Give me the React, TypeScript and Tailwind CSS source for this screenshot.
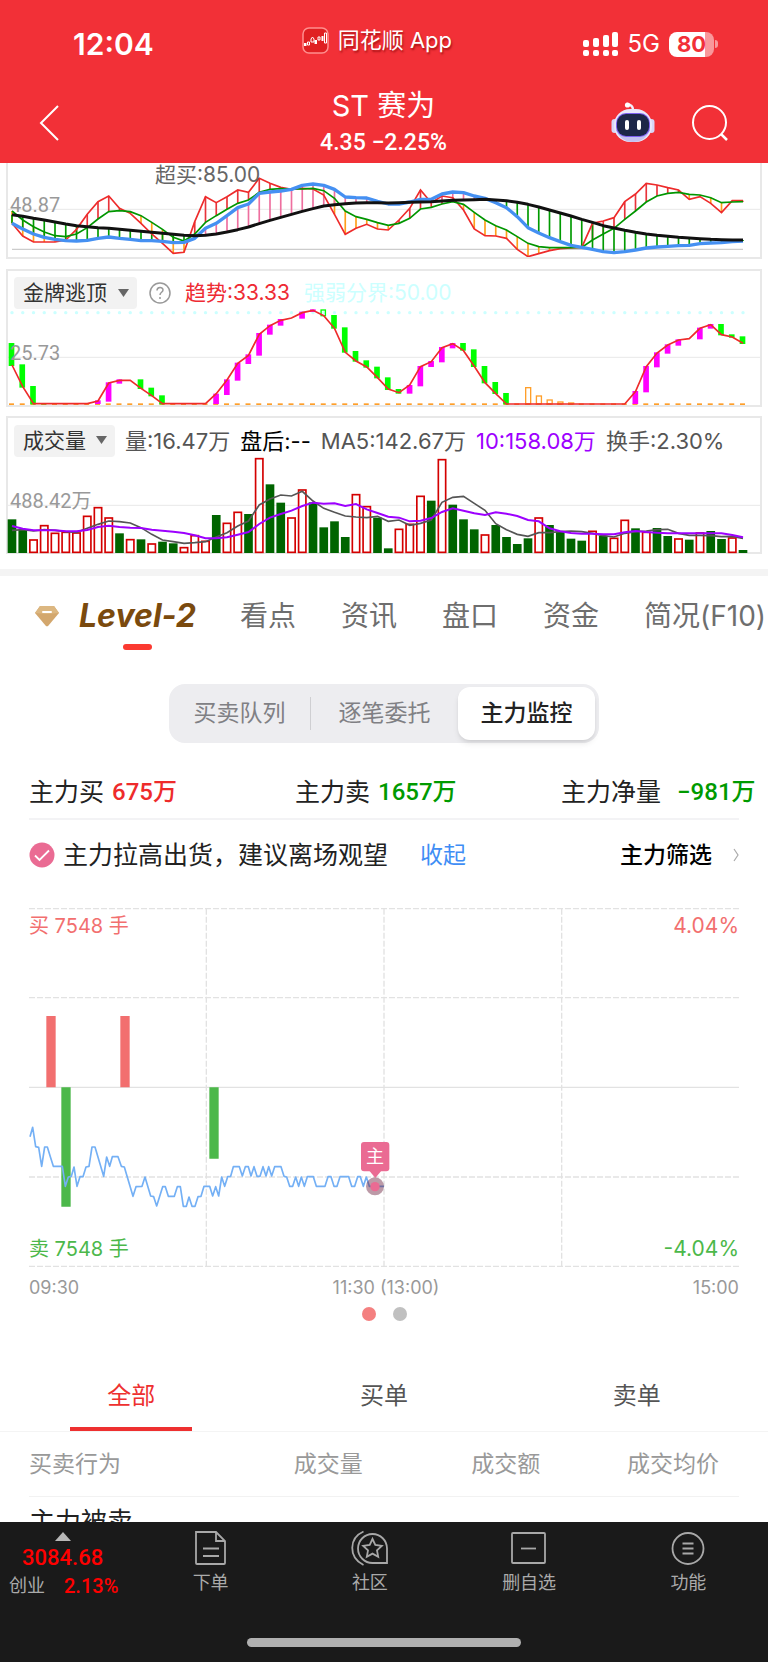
import { useState } from "react";

// Chart drawings use three units per pixel
const xAt = (i: number) => 36 + i * 32.25;
const toPoints = (ys: number[]) => ys.map((y, i) => `${xAt(i)},${y}`).join(" ");

const fastLine = [
  190, 228, 246, 246, 246, 240, 208, 163, 125, 108, 145, 160, 190, 222, 250, 280, 277, 185, 110, 128, 110, 90, 97, 55,
  70, 82, 88, 85, 87, 105, 163, 223, 205, 193, 207, 210, 180, 145, 90, 128, 108, 113, 150, 207, 227, 228, 235, 268, 290,
  281, 272, 266, 264, 262, 190, 183, 173, 125, 102, 70, 75, 83, 90, 118, 110, 130, 158, 122, 122,
];
const slowLine = [
  153, 180, 200, 216, 227, 230, 222, 203, 177, 155, 152, 155, 167, 187, 208, 232, 243, 222, 187, 167, 148, 130, 120, 97,
  88, 86, 87, 87, 85, 92, 115, 153, 170, 178, 188, 196, 190, 175, 147, 142, 132, 125, 133, 157, 180, 197, 210, 230, 250,
  260, 263, 263, 263, 262, 240, 222, 205, 178, 153, 126, 108, 100, 97, 103, 105, 113, 128, 126, 125,
];
const blueLine = [
  190, 207, 222, 232, 238, 242, 243, 241, 235, 231, 235, 238, 242, 242, 244, 248, 247, 235, 205, 190, 167, 143, 132, 100,
  96, 93, 88, 76, 72, 76, 88, 111, 113, 114, 124, 132, 132, 126, 118, 118, 102, 96, 98, 108, 115, 128, 143, 170, 203,
  219, 233, 245, 256, 262, 268, 275, 278, 275, 270, 264, 261, 259, 257, 256, 251, 249, 248, 245, 243,
];
const blackLine = [
  164, 169, 175, 180, 186, 192, 197, 200, 203, 205, 208, 211, 214, 217, 220, 223, 226, 227, 226, 222, 216, 209, 201, 191,
  181, 172, 163, 154, 146, 138, 134, 131, 129, 128, 128, 129, 128, 127, 126, 125, 123, 121, 120, 119, 118, 120, 122, 127,
  133, 141, 150, 159, 168, 178, 187, 197, 204, 211, 217, 222, 226, 229, 232, 234, 236, 238, 239, 240, 240,
];

const trendLine = [
  300, 365, 416, 416, 416, 416, 416, 416, 408, 354, 346, 346, 370, 392, 416, 416, 416, 416, 416, 386, 345, 295, 271, 208,
  182, 166, 159, 143, 136, 152, 190, 262, 288, 306, 338, 372, 383, 360, 305, 290, 248, 236, 257, 304, 353, 386, 417, 417,
  417, 417, 417, 417, 417, 417, 417, 417, 417, 417, 380, 305, 264, 240, 225, 221, 190, 179, 209, 216, 235,
];
// [index, top, bottom]
const fallBars = [
  [0, 234, 303], [1, 298, 368], [2, 363, 418], [3, 414, 418], [12, 343, 372], [13, 368, 394], [14, 391, 418],
  [30, 150, 191], [31, 187, 263], [32, 258, 290], [33, 286, 308], [34, 305, 340], [35, 337, 375], [36, 372, 386],
  [42, 234, 257], [43, 253, 306], [44, 303, 355], [45, 351, 387], [46, 384, 418], [66, 177, 211], [67, 208, 218],
  [68, 214, 237],
];
const riseBars = [
  [8, 406, 417], [9, 352, 410], [10, 343, 356], [19, 386, 417], [20, 343, 390], [21, 293, 347], [22, 268, 297],
  [23, 204, 272], [24, 179, 209], [25, 162, 182], [27, 140, 161], [28, 133, 141], [37, 360, 386], [38, 303, 364],
  [39, 288, 306], [40, 246, 292], [41, 234, 250], [58, 378, 417], [59, 303, 382], [60, 262, 307], [61, 238, 266],
  [62, 223, 242], [64, 188, 223], [65, 177, 191],
];
const signalBars = [[48, 368], [49, 393], [50, 405], [51, 411], [52, 414]];

const volumeTops = [
  313, 345, 373, 330, 353, 350, 352, 302, 276, 307, 355, 372, 373, 385, 380, 385, 396, 360, 377, 300, 323, 290, 297, 129,
  208, 263, 307, 223, 262, 337, 319, 366, 237, 273, 308, 400, 341, 326, 242, 257, 132, 269, 313, 343, 358, 330, 366, 387,
  370, 307, 330, 350, 371, 377, 347, 362, 368, 314, 340, 350, 339, 363, 370, 374, 352, 348, 372, 367, 405,
];
const volumeSides = "GGRRRRRRRRGRGRGGRRRGRRGRGGRRGGGGRRGGRRRGRGGGRGGGGRGGGGRGRRGRGGRGRGGRG";
const ma5 = [
  346, 344, 348, 344, 346, 350, 352, 340, 328, 318, 320, 324, 338, 358, 375, 380, 385, 383, 380, 366, 353, 333, 318, 270,
  252, 240, 243, 229, 258, 280, 292, 303, 306, 308, 304, 319, 315, 331, 325, 315, 262, 247, 244, 265, 286, 326, 344, 358,
  364, 353, 353, 350, 348, 350, 355, 362, 366, 355, 350, 348, 344, 343, 355, 361, 361, 362, 365, 364, 370,
];
const ma10 = [
  333, 341, 346, 346, 346, 349, 349, 345, 336, 332, 336, 338, 339, 344, 347, 350, 354, 361, 370, 370, 367, 359, 351, 327,
  308, 297, 287, 273, 263, 266, 265, 273, 267, 283, 294, 305, 308, 319, 317, 309, 291, 280, 287, 295, 300, 292, 296, 303,
  315, 319, 340, 349, 354, 356, 356, 358, 358, 352, 348, 351, 353, 355, 355, 355, 355, 355, 355, 360, 367,
];

const priceLine =
  "90,740 98,712 107,770 116,772 125,829 134,771 142,771 151,800 160,829 187,829 196,889 205,861 214,859 222,831 231,889 240,860 249,860 258,831 267,829 276,771 285,771 311,859 320,801 329,829 337,800 354,800 364,829 373,831 399,919 408,890 426,889 435,861 452,918 461,920 470,948 488,890 496,890 505,919 523,919 532,890 541,890 550,949 559,949 567,921 576,949 585,949 594,920 603,919 612,889 629,889 638,918 647,890 656,918 665,861 674,889 683,860 692,859 700,830 718,830 727,858 736,830 745,830 753,858 762,830 771,859 780,859 789,830 798,858 806,830 815,858 824,830 843,830 852,859 860,861 869,889 878,889 887,861 896,889 904,861 913,889 922,860 940,860 949,889 975,889 984,860 993,860 1002,889 1011,889 1020,860 1046,860 1055,889 1064,889 1073,860 1081,860 1090,889 1099,861 1108,889 1152,889";

function StatusBar() {
  return (
    <div className="flex h-[88px] items-center pl-[73px] pr-[50px] text-white">
      <span className="text-[30px] font-semibold leading-none">12:04</span>
      <div className="ml-[148px] flex items-center gap-[9px] pb-2">
        <svg width="27" height="27" viewBox="0 0 27 27">
          <rect x="1" y="1" width="25" height="25" rx="6" fill="#e01f22" stroke="#ff8f8f" strokeWidth="1.5" />
          <g fill="none" stroke="#fff" strokeWidth="1">
            <path d="M9 12l1.500-2 1.500 2v3H9zM16 10h2v3h-2zM22.500 6h2v10h-2zM5.500 15h2v3h-2z" />
          </g>
          <path d="M2 16h2.500v3H2zM12.500 13H15v4h-2.500zM19.500 9h2v5h-2z" fill="#fff" />
        </svg>
        <span className="text-[22px] leading-none [text-shadow:1px_2px_2px_rgba(120,0,0,0.6)]">同花顺 App</span>
      </div>
      <div className="ml-auto flex items-center gap-[9px]">
        <svg width="36" height="26" viewBox="0 0 36 26" fill="#fff">
          <rect x="0" y="9" width="6" height="7" rx="2" />
          <rect x="10" y="7" width="6" height="9" rx="2" />
          <rect x="20" y="4" width="6" height="12" rx="2" />
          <rect x="29" y="1" width="6" height="15" rx="2" />
          <rect x="0" y="19" width="6" height="6" rx="2" />
          <rect x="10" y="19" width="6" height="6" rx="2" />
          <rect x="20" y="19" width="6" height="6" rx="2" />
          <rect x="29" y="19" width="6" height="6" rx="2" />
        </svg>
        <span className="text-[24px] leading-none">5G</span>
        <div className="flex items-center gap-px">
          <span className="flex h-[25px] w-[45px] items-center justify-center rounded-lg bg-linear-to-r from-white from-80% to-white/50 to-80% text-[22px] font-bold leading-none text-[#f23037]">
            80
          </span>
          <span className="h-2 w-[3px] rounded-r-full bg-white/50" />
        </div>
      </div>
    </div>
  );
}

function RobotIcon() {
  return (
    <svg width="44" height="42" viewBox="0 0 44 42">
      <path d="M22 8c0-4-2-5-6-6" fill="none" stroke="#f3eefc" strokeWidth="2.500" strokeLinecap="round" />
      <circle cx="16.500" cy="3" r="2.600" fill="#fff" />
      <rect x="0.500" y="17" width="6" height="14" rx="3" fill="#d8d6f6" />
      <rect x="37.500" y="17" width="6" height="14" rx="3" fill="#d8d6f6" />
      <rect x="3" y="7" width="38" height="33" rx="16" fill="#e9e8fb" />
      <path d="M5 28c3 8 9 12 17 12s14-4 17-12z" fill="#c3c1f0" />
      <rect x="5" y="11" width="34" height="24" rx="10" fill="#7d5ff0" />
      <rect x="6" y="12" width="32" height="22" rx="9" fill="#1d2748" />
      <rect x="14" y="18" width="4" height="10" rx="2" fill="#fff" />
      <rect x="26" y="18" width="4" height="10" rx="2" fill="#fff" />
    </svg>
  );
}

function TitleBar() {
  return (
    <div className="grid h-[75px] grid-cols-[1fr_auto_1fr] items-center pl-[38px] pr-[39px] text-white">
      <button aria-label="返回" className="justify-self-start pb-[5px]">
        <svg width="22" height="38" viewBox="0 0 22 38" fill="none" stroke="#fff" strokeWidth="2">
          <path d="M20 2 3 19l17 17" />
        </svg>
      </button>
      <div className="text-center">
        <h1 className="text-[29px] leading-[34px]">ST 赛为</h1>
        <p className="font-[Roboto] text-[23px] font-medium leading-[40px]">4.35 −2.25%</p>
      </div>
      <div className="flex items-center gap-[36px] justify-self-end pb-[5px]">
        <button aria-label="智能助手">
          <RobotIcon />
        </button>
        <button aria-label="搜索">
          <svg width="38" height="38" viewBox="0 0 38 38" fill="none" stroke="#fff" strokeWidth="2">
            <circle cx="18.500" cy="18.500" r="16.500" />
            <path d="m30 30 6 6" strokeWidth="2.500" />
          </svg>
        </button>
      </div>
    </div>
  );
}

function IndicatorSelect({ name, label, wide }: { name: string; label: string; wide?: boolean }) {
  return (
    <div className="relative">
      <select
        aria-label={label}
        className={`h-8 appearance-none rounded bg-[#f2f2f2] pl-[9px] text-[21px] leading-8 text-[#333] ${
          wide ? "w-[123px]" : "w-[101px]"
        }`}
      >
        <option>{name}</option>
      </select>
      <svg className="pointer-events-none absolute right-2 top-3" width="11" height="8" viewBox="0 0 11 8" fill="#666">
        <path d="M0 0h11L5.500 8z" />
      </svg>
    </div>
  );
}

function OscillatorPanel() {
  return (
    <section className="relative mx-[6px] border-2 border-t-0 border-[#e8e8e8]">
      <svg viewBox="24 9 2256 282" className="block w-full" fill="none">
        <path d="M24 148H2280" stroke="#e8e8e8" strokeWidth="3" />
        <path d="M36 268H2229" stroke="#ccc" strokeWidth="4" />
        {blackLine.map((y, i) => (
          <g key={i} strokeWidth="5">
            <path d={`M${xAt(i)} ${fastLine[i]}V${slowLine[i]}`} stroke={fastLine[i] < slowLine[i] ? "#e8333a" : "#ff9f1a"} />
            <path d={`M${xAt(i)} ${y}V${blueLine[i]}`} stroke={blueLine[i] > y ? "#009a00" : "#ee6f9f"} />
          </g>
        ))}
        <polyline points={toPoints(fastLine)} stroke="#ee2b2b" strokeWidth="5" />
        <polyline points={toPoints(slowLine)} stroke="#009600" strokeWidth="5" />
        <polyline points={toPoints(blueLine)} stroke="#4590f2" strokeWidth="10" strokeLinejoin="round" />
        <polyline points={toPoints(blackLine)} stroke="#111" strokeWidth="9" strokeLinejoin="round" />
      </svg>
      <span className="absolute left-[147px] top-0 text-[21px] leading-6 text-[#666]">超买:85.00</span>
      <span className="absolute left-[2px] top-[30px] font-[Roboto] text-[20px] leading-6 text-[#999]">48.87</span>
    </section>
  );
}

function TrendPanel() {
  return (
    <section className="relative mx-[6px] mt-[10px] border-2 border-[#e8e8e8]">
      <div className="flex h-[37px] items-center pl-[6px] pt-[6px] text-[21px] leading-8">
        <IndicatorSelect name="金牌逃顶" label="副图指标" wide />
        <button aria-label="指标说明" className="ml-3">
          <svg width="22" height="22" viewBox="0 0 22 22" fill="none" stroke="#999" strokeWidth="1.500">
            <circle cx="11" cy="11" r="10" />
            <path d="M8 8.500c0-4 6-4 6-.500 0 2.500-3 2-3 5M11 15v2" />
          </svg>
        </button>
        <span className="ml-[14px] text-[#ee2b33]">趋势:33.33</span>
        <span className="ml-[14px] text-[#ccffff]">强弱分界:50.00</span>
      </div>
      <svg viewBox="24 129 2256 291" className="block w-full overflow-visible" fill="none">
        <path d="M24 277H2280" stroke="#e8e8e8" strokeWidth="3" />
        {trendLine.map((_, i) => (
          <g key={i}>
            <circle cx={xAt(i)} cy="143" r="5" fill="#ccffff" />
            <rect x={xAt(i) - 9} y="415" width="15" height="5" fill="#ff9f2a" />
          </g>
        ))}
        {fallBars.map(([i, top, bottom]) => (
          <rect key={i} x={xAt(i) - 10} y={top} width="17" height={bottom - top} fill="#00ff00" />
        ))}
        <rect x={xAt(29) - 8} y="135" width="13" height="17" stroke="#00ff00" strokeWidth="4" />
        {riseBars.map(([i, top, bottom]) => (
          <rect key={i} x={xAt(i) - 9} y={top} width="17" height={bottom - top} fill="#ff00ff" />
        ))}
        {signalBars.map(([i, top]) => (
          <rect key={i} x={xAt(i) - 7} y={top} width="15" height={417 - top} stroke="#ff9f2a" strokeWidth="4" />
        ))}
        <polyline points={toPoints(trendLine)} stroke="#ee2b2b" strokeWidth="5" />
      </svg>
      <span className="absolute left-[2px] top-[70px] font-[Roboto] text-[20px] leading-6 text-[#999]">25.73</span>
    </section>
  );
}

function VolumePanel() {
  return (
    <section className="relative mx-[6px] mt-[9px] border-2 border-[#e8e8e8]">
      <div className="flex h-[37px] items-center gap-[10px] whitespace-nowrap pl-[6px] pt-[8px] text-[22px] leading-8 text-[#555]">
        <IndicatorSelect name="成交量" label="成交量指标" />
        <span>量:16.47万</span>
        <span className="text-black">盘后:--</span>
        <span>MA5:142.67万</span>
        <span className="text-[#9d00ff]">10:158.08万</span>
        <span>换手:2.30%</span>
      </div>
      <svg viewBox="24 120 2256 291" className="block w-full overflow-visible" fill="none">
        <path d="M24 271H2280" stroke="#e8e8e8" strokeWidth="3" />
        {volumeTops.map((top, i) =>
          volumeSides[i] === "R" ? (
            <rect key={i} x={xAt(i) - 11} y={top + 2} width="22" height={410 - top} stroke="#d40000" strokeWidth="5" fill="#fff" />
          ) : (
            <rect key={i} x={xAt(i) - 13} y={top} width="26" height={414 - top} fill="#006400" />
          )
        )}
        <polyline points={toPoints(ma5)} stroke="#555" strokeWidth="5" />
        <polyline points={toPoints(ma10)} stroke="#9d00ff" strokeWidth="6" />
      </svg>
      <span className="absolute left-[2px] top-[71px] font-[Roboto,'Noto_Sans_CJK_SC'] text-[20px] leading-6 text-[#999]">
        488.42万
      </span>
    </section>
  );
}

function SectionTabs() {
  const tabs = ["看点", "资讯", "盘口", "资金", "简况(F10)"];
  return (
    <nav className="mt-[15px] flex h-[87px] items-center overflow-hidden whitespace-nowrap border-t-[7px] border-[#f4f4f4] pl-[34px] text-[28px] leading-9 text-[#6e6e6e]">
      <svg width="26" height="22" viewBox="0 0 26 22">
        <path d="M6 1h14l5 7-10.500 12.500a2 2 0 0 1-3 0L1 8z" fill="#d3a76d" />
        <path d="M1 8 6 1h14l5 7-12 1z" fill="#dcb781" />
        <path d="M9 7h8" stroke="#fff" strokeWidth="2" strokeLinecap="round" />
      </svg>
      <button className="relative ml-[19px] h-full w-[117px] text-[32px] font-bold italic text-[#7a4a0e]">
        Level-2
        <span className="absolute bottom-[6px] left-[44px] h-[6px] w-[29px] rounded-full bg-[#fb3a31]" />
      </button>
      <div className="ml-[44px] flex gap-[45px]">
        {tabs.map((tab) => (
          <button key={tab}>{tab}</button>
        ))}
      </div>
    </nav>
  );
}

function Segments() {
  const [active, setActive] = useState("主力监控");
  const items = [
    { name: "买卖队列", width: "w-[141px]" },
    { name: "逐笔委托", width: "w-[147px]" },
    { name: "主力监控", width: "w-[137px]" },
  ];
  return (
    <div className="mx-auto mt-7 flex h-[59px] w-[430px] items-center rounded-2xl bg-[#ededf0] text-[23px]">
      {items.map((item, i) => (
        <div key={item.name} className="flex items-center">
          {i === 1 && <span className="h-[33px] w-px bg-[#cfcfd2]" />}
          <button
            onClick={() => setActive(item.name)}
            className={`h-[53px] rounded-xl ${item.width} ${
              active === item.name ? "bg-white font-medium text-[#222] shadow-md" : "text-[#808084]"
            }`}
          >
            {item.name}
          </button>
        </div>
      ))}
    </div>
  );
}

function Stats() {
  const stats = [
    { label: "主力买", value: "675万", color: "text-[#ee2b2b]", gap: "gap-2" },
    { label: "主力卖", value: "1657万", color: "text-[#009a00]", gap: "gap-2" },
    { label: "主力净量", value: "−981万", color: "text-[#009a00]", gap: "gap-4" },
  ];
  return (
    <div className="mt-[22px] grid h-[53px] grid-cols-[9fr_9fr_7fr] items-center whitespace-nowrap pl-[29px]">
      {stats.map((stat) => (
        <div key={stat.label} className={`flex items-center ${stat.gap}`}>
          <span className="text-[25px] leading-8 text-[#222]">{stat.label}</span>
          <span className={`font-[Roboto,'Noto_Sans_CJK_SC'] text-[24px] font-medium leading-8 ${stat.color}`}>{stat.value}</span>
        </div>
      ))}
    </div>
  );
}

function Advice() {
  return (
    <div className="mx-[29px] flex h-[72px] items-center whitespace-nowrap border-t-2 border-[#f3f3f5]">
      <svg width="26" height="26" viewBox="0 0 26 26" fill="none">
        <circle cx="13" cy="13" r="12.500" fill="#ea6b93" />
        <path d="m6 13.500 4.500 4.500L20 8.500" stroke="#fff" strokeWidth="1.800" />
      </svg>
      <span className="ml-2 text-[25px] leading-8 text-[#222]">主力拉高出货，建议离场观望</span>
      <button className="ml-8 text-[23px] leading-8 text-[#3f8ef5]">收起</button>
      <button className="ml-auto flex items-center gap-[21px] text-[23px] font-medium leading-8 text-black">
        主力筛选
        <svg width="6" height="14" viewBox="0 0 6 14" fill="none" stroke="#aaa" strokeWidth="1.200">
          <path d="m1 1 4 6-4 6" />
        </svg>
      </button>
    </div>
  );
}

function MonitorChart() {
  return (
    <section className="mx-[29px] mt-[18px]">
      <div className="relative leading-6">
        <svg viewBox="87 54 2130 1077" className="block w-full" fill="none">
          <g stroke="#e2e2e2" strokeWidth="4">
            <path d="M87 56H2217M87 323H2217M87 861H2217M87 1129H2217" strokeDasharray="18 6" />
            <path d="M619 56V1129M1152 56V1129M1685 56V1129" strokeDasharray="18 6" />
            <path d="M87 592H2217" />
          </g>
          <path d="M139 378h28v214h-28zM361 378h28v214h-28z" fill="#f26f6f" />
          <path d="M184 592h28v358h-28zM628 592h28v214h-28z" fill="#4cb84a" />
          <polyline points={priceLine} stroke="#74b0f5" strokeWidth="5" strokeLinejoin="round" />
          <circle cx="1125" cy="889" r="27" fill="#6b1e3c" fillOpacity="0.450" />
          <circle cx="1125" cy="890" r="14" fill="#ea6b93" />
          <path d="M1108 842h36l-18 22z" fill="#ea6b93" />
          <rect x="1083" y="756" width="85" height="88" rx="9" fill="#ea6b93" />
          <text x="1125" y="820" fontSize="54" fill="#fff" textAnchor="middle">
            主
          </text>
        </svg>
        <span className="absolute left-0 top-[6px] text-[20px] text-[#f26f6f]">买 7548 手</span>
        <span className="absolute right-0 top-[6px] text-[21px] text-[#f26f6f]">4.04%</span>
        <span className="absolute bottom-[6px] left-0 text-[20px] text-[#4cb84a]">卖 7548 手</span>
        <span className="absolute bottom-[6px] right-0 text-[21px] text-[#4cb84a]">-4.04%</span>
      </div>
      <div className="flex h-10 items-center justify-between text-[18px] text-[#999]">
        <span>09:30</span>
        <span>11:30 (13:00)</span>
        <span>15:00</span>
      </div>
      <div className="flex justify-center gap-[17px]">
        <button aria-label="第1页" className="size-[14px] rounded-full bg-[#f48080]" />
        <button aria-label="第2页" className="size-[14px] rounded-full bg-[#c0c0c0]" />
      </div>
    </section>
  );
}

function Orders() {
  const [filter, setFilter] = useState("全部");
  return (
    <section className="text-[23px]">
      <div className="mt-[39px] grid h-[72px] grid-cols-3 border-b border-[#f4f4f4] px-[5px] text-[24px]">
        {["全部", "买单", "卖单"].map((name) => (
          <button
            key={name}
            onClick={() => setFilter(name)}
            className={`w-[122px] justify-self-center border-y-4 border-t-transparent ${
              filter === name ? "border-b-[#ee3030] text-[#ee3030]" : "border-b-transparent text-[#555]"
            }`}
          >
            {name}
          </button>
        ))}
      </div>
      <div className="px-[29px]">
        <table className="w-full table-fixed whitespace-nowrap text-right">
          <thead>
            <tr className="h-16 border-b border-[#f2f2f2] text-[#999]">
              <th className="w-[22%] text-left font-normal">买卖行为</th>
              <th className="w-[25%] font-normal">成交量</th>
              <th className="w-[25%] font-normal">成交额</th>
              <th className="w-[28%] pr-5 font-normal">成交均价</th>
            </tr>
          </thead>
          <tbody>
            <tr className="h-[52px]">
              <td className="text-left text-[26px] leading-8 text-[#222]">主力被卖</td>
            </tr>
          </tbody>
        </table>
      </div>
    </section>
  );
}

function BottomNav() {
  return (
    <footer className="shrink-0 bg-[#1a1a1a] pb-[15px] text-[#aaa]">
      <div className="flex h-[116px]">
        <button className="flex w-[131px] flex-col items-start pt-[10px]">
          <svg className="ml-[55px]" width="16" height="9" viewBox="0 0 16 9" fill="#b8b8b8">
            <path d="M8 0l8 9H0z" />
          </svg>
          <span className="ml-[22px] mt-[3px] font-[Roboto] text-[22px] font-medium leading-7 text-[#f00]">3084.68</span>
          <span className="flex items-center gap-[19px] pl-[9px] leading-7">
            <span className="text-[18px]">创业</span>
            <span className="font-[Roboto] text-[20px] font-medium text-[#f00]">2.13%</span>
          </span>
        </button>
        <div className="grid flex-1 grid-cols-4 text-[18px] leading-6">
          <button className="flex flex-col items-center gap-1 pt-[8px]">
            <svg width="36" height="37" viewBox="0 0 36 37" fill="none" stroke="#a8a8a8" strokeWidth="1.800">
              <path d="M3 2h20l9 9v22a1 1 0 0 1-1 1H4a1 1 0 0 1-1-1V3zM23 2v9h9M10 18.500h16M10 26h16" />
            </svg>
            下单
          </button>
          <button className="flex flex-col items-center gap-1 pt-[8px]">
            <svg width="38" height="37" viewBox="0 0 38 37" fill="none" stroke="#a8a8a8" strokeWidth="1.800">
              <path d="M36 33V18.500A14.500 14.500 0 1 0 21.500 33z" />
              <path d="M12.500 1.500C-2 8-3 27 12.500 35" />
              <path d="m21.500 9 2.800 6 6.500.800-4.800 4.500 1.200 6.500-5.700-3.200-5.700 3.200 1.200-6.500-4.800-4.500 6.500-.800z" />
            </svg>
            社区
          </button>
          <button className="flex flex-col items-center gap-1 pt-[8px]">
            <svg width="36" height="37" viewBox="0 0 36 37" fill="none" stroke="#a8a8a8" strokeWidth="1.800">
              <rect x="1" y="3" width="33" height="30" rx="1" />
              <path d="M10 18.500h15" />
            </svg>
            删自选
          </button>
          <button className="flex flex-col items-center gap-1 pt-[8px]">
            <svg width="36" height="37" viewBox="0 0 36 37" fill="none" stroke="#a8a8a8" strokeWidth="1.800">
              <circle cx="18" cy="18.500" r="15.500" />
              <path d="M12.500 13.500h11M12.500 18.500h11M12.500 23.500h11" />
            </svg>
            功能
          </button>
        </div>
      </div>
      <div className="mx-auto h-[9px] w-[274px] rounded-full bg-[#b0b0b0]" />
    </footer>
  );
}

export default function App() {
  return (
    <div className="flex h-screen flex-col bg-white font-[Inter,'Noto_Sans_CJK_SC',sans-serif]">
      <header className="shrink-0 bg-[#f23037]">
        <StatusBar />
        <TitleBar />
      </header>
      <main className="min-h-0 flex-1 overflow-hidden">
        <OscillatorPanel />
        <TrendPanel />
        <VolumePanel />
        <SectionTabs />
        <Segments />
        <Stats />
        <Advice />
        <MonitorChart />
        <Orders />
      </main>
      <BottomNav />
    </div>
  );
}
